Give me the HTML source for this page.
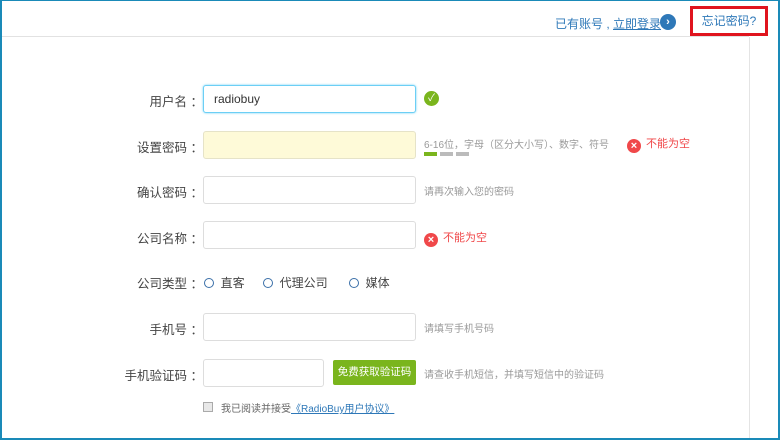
<!DOCTYPE html>
<html><head><meta charset="utf-8"><style>
*{margin:0;padding:0;box-sizing:border-box}
body{width:780px;height:440px;overflow:hidden;background:#fff;font-family:"Liberation Sans","Noto Sans CJK SC",sans-serif;font-size:12px;color:#333;position:relative}
.frame{position:absolute;left:0;top:0;width:780px;height:440px;border:2px solid #1a8ab8;border-top-width:1px}
.abs{position:absolute}
.lbl{position:absolute;width:140px;left:63px;text-align:right;font-size:12.5px;color:#444;white-space:nowrap}
.inp{position:absolute;left:203px;width:213px;height:28px;border:1px solid #ddd;border-radius:3px;background:#fff}
.hint{position:absolute;color:#999;font-size:10px;white-space:nowrap}
.err{position:absolute;color:#f0484a;font-size:11px;white-space:nowrap}
.x{display:inline-block;width:14px;height:14px;border-radius:50%;background:#f0484a;color:#fff;font-size:11px;line-height:14px;text-align:center;font-weight:bold;vertical-align:-2px;margin-right:5px}
.radio{display:inline-block;width:10px;height:10px;border:1.5px solid #3a6fa8;border-radius:50%;vertical-align:-1px}
</style></head><body>
<div class="frame"></div>
<div class="abs" style="left:2px;top:36px;width:747px;height:1px;background:#e2e2e2"></div>
<div class="abs" style="left:749px;top:37px;width:1px;height:401px;background:#e4e4e4"></div>
<div class="abs" style="left:555px;top:15px;color:#2e78b8;font-size:12px;white-space:nowrap">已有账号 , <span style="text-decoration:underline">立即登录</span></div>
<div class="abs" style="left:660px;top:14px;width:16px;height:16px;border-radius:50%;background:#2e78b8;color:#fff;font-size:11px;line-height:16px;text-align:center;font-weight:bold">›</div>
<div class="abs" style="left:690px;top:6px;width:78px;height:30px;border:3px solid #e0141e;color:#2e78b8;font-size:12px;line-height:24px;text-align:center">忘记密码?</div>

<div class="lbl" style="top:91px">用户名 ：</div>
<div class="inp" style="top:85px;border:1px solid #6ccff5;box-shadow:0 0 2px #6ccff5;padding-left:10px;line-height:26px;font-size:12px">radiobuy</div>
<div class="abs" style="left:424px;top:91px;width:15px;height:15px;border-radius:50%;background:#7ab51d;color:#fff;font-size:10px;line-height:15px;text-align:center">✓</div>

<div class="lbl" style="top:137px">设置密码 ：</div>
<div class="inp" style="top:131px;background:#fefad8;border-color:#e6e3c8"></div>
<div class="hint" style="left:424px;top:136px">6-16位，字母（区分大小写）、数字、符号</div>
<div class="abs" style="left:424px;top:152px;width:13px;height:4px;background:#7ab51d"></div>
<div class="abs" style="left:440px;top:152px;width:13px;height:4px;background:#bbb"></div>
<div class="abs" style="left:456px;top:152px;width:13px;height:4px;background:#bbb"></div>
<div class="err" style="left:627px;top:135px"><span class="x">×</span>不能为空</div>

<div class="lbl" style="top:182px">确认密码 ：</div>
<div class="inp" style="top:176px"></div>
<div class="hint" style="left:424px;top:183px">请再次输入您的密码</div>

<div class="lbl" style="top:228px">公司名称 ：</div>
<div class="inp" style="top:221px"></div>
<div class="err" style="left:424px;top:229px"><span class="x">×</span>不能为空</div>

<div class="lbl" style="top:273px">公司类型 ：</div>
<div class="abs" style="left:204px;top:274px;font-size:12px;color:#444"><span class="radio"></span>&nbsp; 直客</div>
<div class="abs" style="left:263px;top:274px;font-size:12px;color:#444"><span class="radio"></span>&nbsp; 代理公司</div>
<div class="abs" style="left:349px;top:274px;font-size:12px;color:#444"><span class="radio"></span>&nbsp; 媒体</div>

<div class="lbl" style="top:319px">手机号 ：</div>
<div class="inp" style="top:313px"></div>
<div class="hint" style="left:424px;top:320px">请填写手机号码</div>

<div class="lbl" style="top:365px">手机验证码 ：</div>
<div class="inp" style="top:359px;width:121px"></div>
<div class="abs" style="left:333px;top:360px;width:83px;height:25px;background:#7ab51d;color:#fff;font-size:10.5px;line-height:25px;text-align:center;border-radius:2px;white-space:nowrap">免费获取验证码</div>
<div class="hint" style="left:424px;top:366px">请查收手机短信，并填写短信中的验证码</div>

<div class="abs" style="left:203px;top:402px;width:10px;height:10px;border:1px solid #aaa;background:#e8e8e8"></div>
<div class="abs" style="left:221px;top:400px;font-size:10px;color:#666;white-space:nowrap">我已阅读并接受<span style="color:#2e78b8;text-decoration:underline">《RadioBuy用户协议》</span></div>
</body></html>
